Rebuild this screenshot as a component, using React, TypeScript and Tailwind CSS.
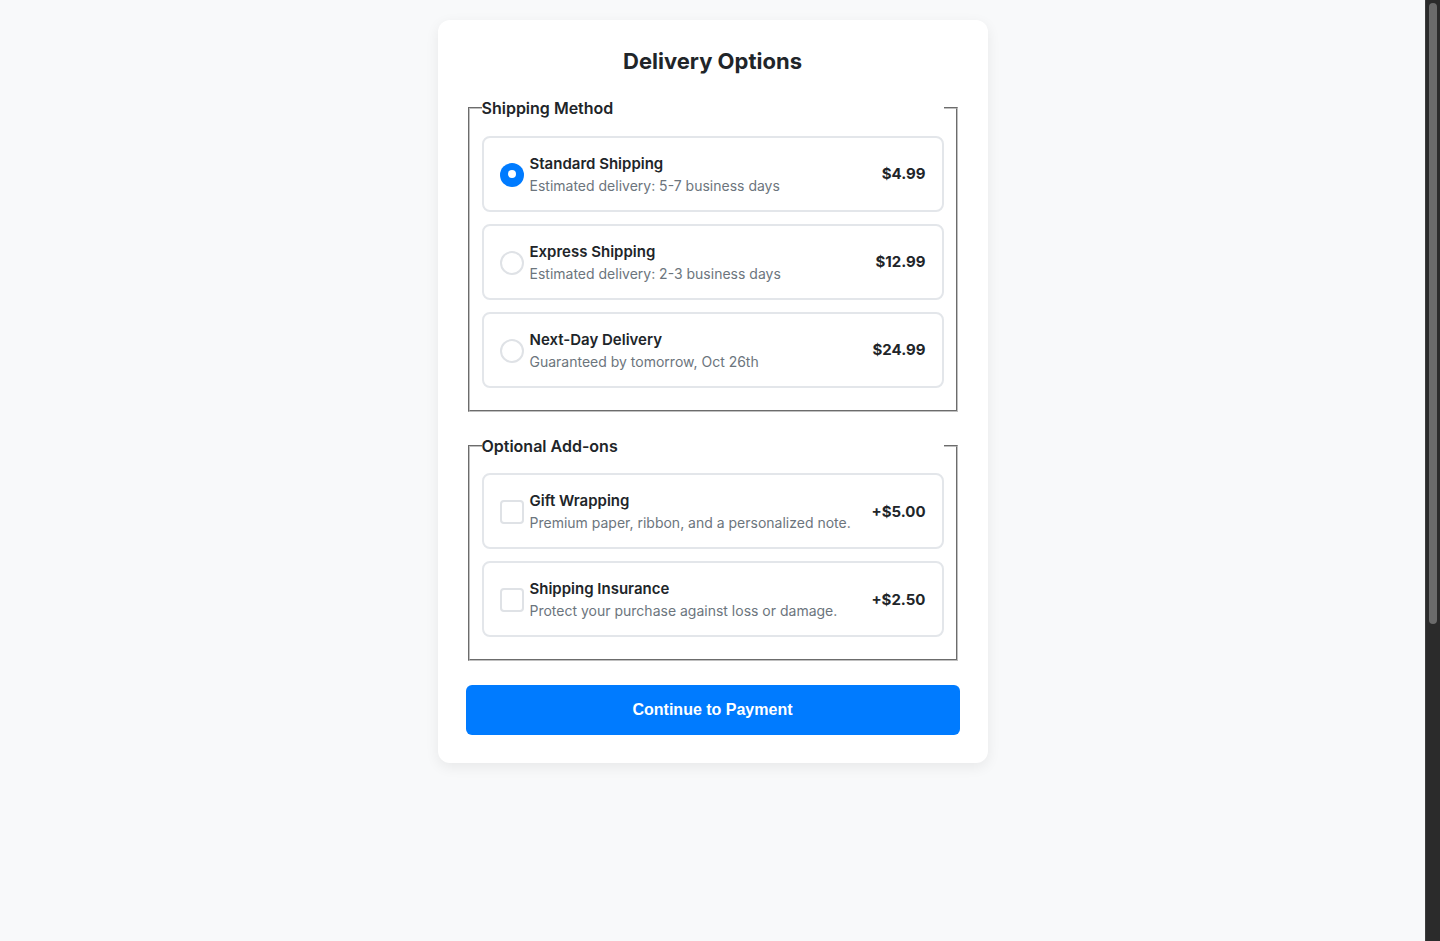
import { useState } from "react";

interface Option {
  id: string;
  title: string;
  desc: string;
  price: string;
}

const shippingOptions: Option[] = [
  { id: "standard", title: "Standard Shipping", desc: "Estimated delivery: 5-7 business days", price: "$4.99" },
  { id: "express", title: "Express Shipping", desc: "Estimated delivery: 2-3 business days", price: "$12.99" },
  { id: "nextday", title: "Next-Day Delivery", desc: "Guaranteed by tomorrow, Oct 26th", price: "$24.99" },
];

const addons: Option[] = [
  { id: "gift", title: "Gift Wrapping", desc: "Premium paper, ribbon, and a personalized note.", price: "+$5.00" },
  { id: "insurance", title: "Shipping Insurance", desc: "Protect your purchase against loss or damage.", price: "+$2.50" },
];

function OptionRow({ opt, control, onClick }: { opt: Option; control: React.ReactNode; onClick: () => void }) {
  return (
    <label
      onClick={onClick}
      className="mb-3 flex cursor-pointer items-center rounded-lg border-2 border-[#e3e6ea] bg-white p-4"
    >
      <span className="mr-[6px] flex-shrink-0 pt-[2px]">{control}</span>
      <span className="flex-1">
        <span className="block text-[15px] font-semibold leading-[19px] text-[#212529]">{opt.title}</span>
        <span className="mt-[5px] block text-[14px] leading-[16px] text-[#6c757d]">{opt.desc}</span>
      </span>
      <span className="pt-[2px] text-[15px] font-bold text-[#212529]">{opt.price}</span>
    </label>
  );
}

export default function App() {
  const [shipping, setShipping] = useState("standard");
  const [extras, setExtras] = useState<Record<string, boolean>>({});

  const toggle = (id: string) => setExtras((prev) => ({ ...prev, [id]: !prev[id] }));

  return (
    <div className="flex h-screen bg-[#f8f9fa] font-['Inter',sans-serif] text-[#212529]">
      <main className="flex-1 overflow-hidden pt-5">
        <div className="mx-auto w-[550px] rounded-xl bg-white p-7 shadow-[0_4px_14px_rgba(0,0,0,0.07)]">
          <h2 className="mb-[22px] text-center text-[22px] font-bold leading-[26px] text-[#212529]">Delivery Options</h2>

          <fieldset className="mx-[2px] mb-[22px] border-2 border-[#c0c0c0] px-3 pb-[10px] pt-[5.6px] [border-style:groove]">
            <legend className="mb-[10px] w-full text-[16px] font-semibold leading-[24px] text-[#212529]">Shipping Method</legend>
            {shippingOptions.map((opt) => (
              <OptionRow
                key={opt.id}
                opt={opt}
                onClick={() => setShipping(opt.id)}
                control={
                  shipping === opt.id ? (
                    <span className="flex h-6 w-6 items-center justify-center rounded-full bg-[#007bff]">
                      <span className="mb-[1px] h-2 w-2 rounded-full bg-white" />
                    </span>
                  ) : (
                    <span className="block h-6 w-6 rounded-full border-2 border-[#dfe2e6]" />
                  )
                }
              />
            ))}
          </fieldset>

          <fieldset className="mx-[2px] mb-6 border-2 border-[#c0c0c0] px-3 pb-[10px] pt-[5.6px] [border-style:groove]">
            <legend className="mb-[10px] w-full text-[16px] font-semibold leading-[24px] text-[#212529]">Optional Add-ons</legend>
            {addons.map((opt) => (
              <OptionRow
                key={opt.id}
                opt={opt}
                onClick={() => toggle(opt.id)}
                control={
                  extras[opt.id] ? (
                    <span className="flex h-6 w-6 items-center justify-center rounded bg-[#007bff] text-[14px] font-bold text-white">✓</span>
                  ) : (
                    <span className="block h-6 w-6 rounded border-2 border-[#dfe2e6]" />
                  )
                }
              />
            ))}
          </fieldset>

          <button className="h-[50px] w-full rounded-md bg-[#007bff] font-['Liberation_Sans',Arial,sans-serif] text-[16px] font-bold text-white">
            Continue to Payment
          </button>
        </div>
      </main>

      {/* window scrollbar */}
      <aside className="w-[15px] flex-shrink-0 border-l border-[#3d3d3d] bg-[#2b2b2b]">
        <div className="ml-[3px] mt-[3px] h-[621px] w-2 rounded-full bg-[#6b6b6b]" />
      </aside>
    </div>
  );
}
